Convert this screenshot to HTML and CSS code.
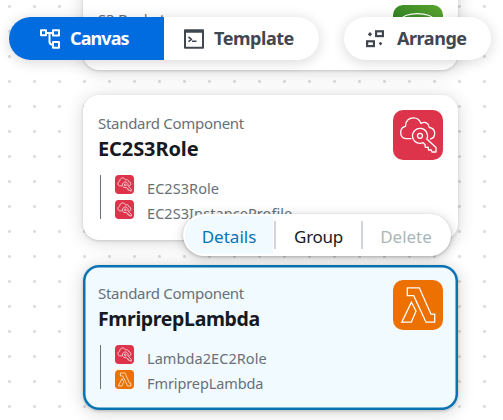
FILE: index.html
```html
<!DOCTYPE html>
<html lang="en">
<head>
<meta charset="utf-8">
<title>Application canvas</title>
<link rel="stylesheet" href="styles.css">
</head>
<body>
<svg class="defs" aria-hidden="true">
  <defs>
    <linearGradient id="green" x1="0" y1="1" x2="1" y2="0"><stop stop-color="#1b660f"/><stop offset=".5" stop-color="#3b8c26"/><stop offset="1" stop-color="#5ba52f"/></linearGradient>
    <symbol id="role" viewBox="0 0 50 50">
      <rect width="50" height="50" rx="10" fill="#dd344c"/>
      <g fill="none" stroke="#fff" stroke-width="var(--line)" stroke-linejoin="round">
        <path d="M18.5 28.7H13C9.5 28.5 7.7 26 7.7 22.5C7.7 19 9.8 17 12.4 16.4C12.3 11 16 7.8 20.5 7.8C24.2 7.8 26.8 10.3 28 13.6C31.8 10.8 35.8 13.2 36.3 17.5C39.8 18 41.7 20 41.7 23.3C41.7 26.5 40 28.6 37 29"/>
        <path d="M33.8 29A7.5 7.5 0 1 0 30 32.7L32 34.5L32.3 37.3L35.2 37.2L35.5 40L38.3 40L39 42H43V37.5Z"/>
        <circle cx="27" cy="25.8" r="2.5"/>
      </g>
    </symbol>
    <symbol id="lambda" viewBox="0 0 50 50">
      <rect width="50" height="50" rx="10" fill="#ed7100"/>
      <g fill="none" stroke="#fff" stroke-width="var(--line)">
        <path d="M14.3 7.8H26.3L38 34.2H41.7V42.2H33L20.7 15.7H14.3Z"/>
        <path d="M18.4 22.3L23 31L18.3 42.2H8.8Z"/>
      </g>
    </symbol>
    <symbol id="bucket" viewBox="0 0 50 50">
      <rect width="50" height="50" rx="10" fill="url(#green)"/>
      <ellipse cx="24.5" cy="14" rx="15.5" ry="5.3" fill="none" stroke="#fff" stroke-width="1.3"/>
      <path d="M9 14L14 40Q25 45 35 40L40 14" fill="none" stroke="#fff" stroke-width="1.3"/>
    </symbol>
  </defs>
</svg>
<main class="canvas">
  <article class="card card-bucket">
    <svg class="card-icon"><use href="#bucket"/></svg>
    <p class="caption">S3 Bucket</p>
  </article>
  <article class="card card-role">
    <svg class="card-icon"><use href="#role"/></svg>
    <p class="kind">Standard Component</p>
    <h2 class="name name-role">EC2S3Role</h2>
    <ul class="resources">
      <li><svg><use href="#role"/></svg><span>EC2S3Role</span></li>
      <li><svg><use href="#role"/></svg><span>EC2S3InstanceProfile</span></li>
    </ul>
  </article>
  <article class="card card-lambda selected">
    <svg class="card-icon"><use href="#lambda"/></svg>
    <p class="kind">Standard Component</p>
    <h2 class="name name-lambda">FmriprepLambda</h2>
    <ul class="resources">
      <li><svg><use href="#role"/></svg><span>Lambda2EC2Role</span></li>
      <li><svg><use href="#lambda"/></svg><span>FmriprepLambda</span></li>
    </ul>
  </article>
  <div class="menu">
    <button class="menu-item details">Details</button>
    <i class="rule"></i>
    <button class="menu-item group">Group</button>
    <i class="rule"></i>
    <button class="menu-item delete" disabled>Delete</button>
  </div>
  <nav class="toolbar">
    <div class="tabs">
      <button class="tab active">
        <svg width="20" height="20" viewBox="0 0 20 20" fill="none" stroke="currentColor" stroke-width="2" stroke-linejoin="round"><rect x="1" y="1.3" width="5" height="5"/><rect x="13" y="1.3" width="6" height="5.3"/><rect x="13" y="13" width="6" height="5.7"/><path d="M6 4H13M9.5 4V13Q9.5 15.7 13 15.7"/></svg>
        <span class="label label-canvas">Canvas</span>
      </button>
      <button class="tab template">
        <svg width="20" height="20" viewBox="0 0 20 20" fill="none" stroke="currentColor" stroke-width="2" stroke-linejoin="round"><rect x="1" y="1.3" width="18" height="17.4"/><path d="M1 2.5H19" stroke-width="2.5"/><path d="M4.5 8L7.5 10.3L4.5 12.6M8 12.3H12.5" stroke-width="1.6"/></svg>
        <span class="label">Template</span>
      </button>
    </div>
    <button class="tab arrange">
      <svg width="20" height="20" viewBox="0 0 20 20" fill="none" stroke="currentColor" stroke-width="2.2"><rect x="11.1" y="2.3" width="6.8" height="4.8"/><rect x="2.1" y="12.3" width="6.8" height="4.8"/><path d="M5 3L7.2 5.2L5 7.4L2.8 5.2ZM15.5 12.8L17.3 14.6L15.5 16.4L13.7 14.6Z" fill="currentColor" stroke="none"/></svg>
      <span class="label">Arrange</span>
    </button>
  </nav>
</main>
</body>
</html>
```

FILE: styles.css
```css
* { box-sizing: border-box; }
body { margin: 0; font-family: "Noto Sans", sans-serif; color: #16191f; }
.defs { position: absolute; width: 0; height: 0; }
.canvas {
  position: relative; width: 503px; height: 420px; overflow: hidden;
  background: radial-gradient(circle at 9.5px 6.5px, #dcdcdc 1.2px, transparent 1.8px) 0 0 / 25px 25px #fff;
}
.card {
  position: absolute; left: 83px; width: 375px; height: 145px;
  padding: 19px 15px 0; border-radius: 16px; background: #fff;
  box-shadow: 0 1px 3px #00000026, 0 2px 18px #00000029;
}
.card-bucket { top: -75px; }
.card-role { top: 95px; }
.card-lambda { top: 265px; }
.selected { background: #f1faff; box-shadow: inset 0 0 0 2.5px #0972b3, 0 1px 3px #0003, 0 2px 18px #0000002e; }
.card-icon { float: right; width: 50px; height: 50px; margin-top: -4px; --line: 1.3px; }
.card-bucket .card-icon { margin-top: 61px; }
.caption { margin: 65px 0 0; font-size: 15px; line-height: 20px; letter-spacing: -.2px; color: #687078; }
.kind { margin: 0; font-size: 15px; line-height: 18px; letter-spacing: -.3px; color: #687078; white-space: nowrap; }
.name { margin: 5px 0 0; font-size: 20px; line-height: 24px; font-weight: 700; white-space: nowrap; }
.name-role { letter-spacing: -.1px; }
.name-lambda { font-size: 19.5px; letter-spacing: -.35px; }
.resources {
  list-style: none; margin: 14px 0 0 2px; padding: 0 0 0 14px;
  height: 44px; border-left: 1px solid #687078;
}
.resources li { display: flex; gap: 13px; height: 25px; font-size: 14.5px; line-height: 27px; letter-spacing: .07px; color: #687078; white-space: nowrap; }
.resources svg { width: 19px; height: 19px; flex: none; --line: 1.8px; }
.card-lambda li:last-child { letter-spacing: -.1px; }
button { border: 0; margin: 0; padding: 0; background: none; color: inherit; font-family: inherit; white-space: nowrap; }
.menu {
  position: absolute; left: 183px; top: 214px; width: 268px; height: 42px;
  display: flex; align-items: center; padding: 2px; border-radius: 21px; background: #fff;
  box-shadow: 0 1px 3px #0003, 0 2px 12px #0003;
}
.menu-item { height: 38px; font-size: 17px; line-height: 38px; padding-top: 2px; }
.details { width: 88px; background: #f1faff; border-radius: 19px 0 0 19px; color: #0972b3; margin-right: 1px; }
.rule { width: 2px; height: 28px; background: #d1d5db; }
.group { width: 85px; letter-spacing: -.3px; }
.delete { width: 86px; color: #aab7b8; }
.toolbar { position: absolute; left: 9px; top: 17px; display: flex; gap: 25px; }
.tabs, .arrange { border-radius: 22px; background: #fff; box-shadow: 0 2px 14px #00000029; }
.tabs { display: flex; width: 310px; overflow: hidden; }
.tab { display: flex; align-items: center; height: 43px; gap: 10px; font-size: 18px; font-weight: 700; line-height: 43px; color: #414750; }
.tab svg { flex: none; }
.active { width: 155px; padding-left: 31px; background: #006ce0; color: #fff; }
.label { margin-top: -1px; letter-spacing: -.45px; }
.label-canvas { letter-spacing: -.9px; }
.template { padding-left: 20px; }
.arrange { width: 147px; padding-left: 21px; gap: 12px; }
```
